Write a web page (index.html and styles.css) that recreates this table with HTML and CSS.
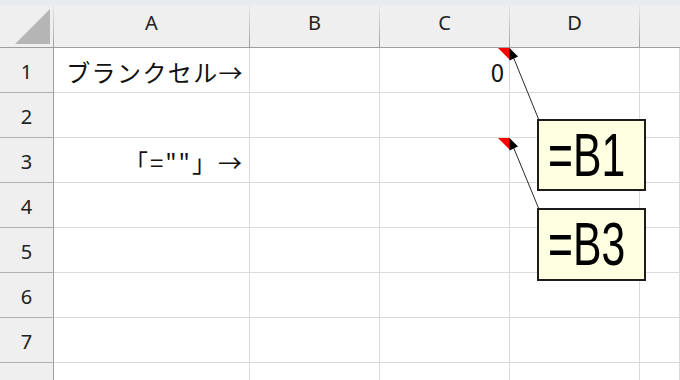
FILE: index.html
```html
<!DOCTYPE html>
<html lang="ja">
<head>
<meta charset="utf-8">
<link rel="stylesheet" href="styles.css">
</head>
<body>
<div class="app">
  <div class="topbar"></div>
  <div class="sheet">
    <div class="grid">
      <div class="corner"><span class="corner-tri"></span></div>
      <div class="colhead">A</div>
      <div class="colhead">B</div>
      <div class="colhead">C</div>
      <div class="colhead">D</div>
      <div class="colhead last"></div>

      <div class="rowhead">1</div>
      <div class="cell jp spaced">ブランクセル→</div>
      <div class="cell"></div>
      <div class="cell jp">0</div>
      <div class="cell"></div>
      <div class="cell"></div>

      <div class="rowhead">2</div>
      <div class="cell"></div>
      <div class="cell"></div>
      <div class="cell"></div>
      <div class="cell"></div>
      <div class="cell"></div>

      <div class="rowhead">3</div>
      <div class="cell jp wide">「=""」→</div>
      <div class="cell"></div>
      <div class="cell"></div>
      <div class="cell"></div>
      <div class="cell"></div>

      <div class="rowhead">4</div>
      <div class="cell"></div>
      <div class="cell"></div>
      <div class="cell"></div>
      <div class="cell"></div>
      <div class="cell"></div>

      <div class="rowhead">5</div>
      <div class="cell"></div>
      <div class="cell"></div>
      <div class="cell"></div>
      <div class="cell"></div>
      <div class="cell"></div>

      <div class="rowhead">6</div>
      <div class="cell"></div>
      <div class="cell"></div>
      <div class="cell"></div>
      <div class="cell"></div>
      <div class="cell"></div>

      <div class="rowhead">7</div>
      <div class="cell"></div>
      <div class="cell"></div>
      <div class="cell"></div>
      <div class="cell"></div>
      <div class="cell"></div>

      <div class="rowhead">8</div>
      <div class="cell"></div>
      <div class="cell"></div>
      <div class="cell"></div>
      <div class="cell"></div>
      <div class="cell"></div>
    </div>

    <svg class="overlay" width="680" height="375" viewBox="0 0 680 375">
      <polygon points="498,43 510,43 510,55" fill="#ff0000"/>
      <polygon points="498,133 510,133 510,145" fill="#ff0000"/>
      <line x1="510" y1="44" x2="538.5" y2="114" stroke="#2a2a2a" stroke-width="1"/>
      <line x1="510" y1="134" x2="538.5" y2="203" stroke="#2a2a2a" stroke-width="1"/>
      <polygon points="509.5,43 518,51.5 509.5,55.5" fill="#000"/>
      <polygon points="509.5,133 518,141.5 509.5,145.5" fill="#000"/>
    </svg>

    <div class="note note1"><span class="note-text">=B1</span></div>
    <div class="note note2"><span class="note-text">=B3</span></div>
  </div>
</div>
</body>
</html>
```
FILE: styles.css
```css
html, body {
  margin: 0;
  padding: 0;
  background: #ffffff;
}

.app {
  width: 680px;
  height: 380px;
  overflow: hidden;
  display: flex;
  flex-direction: column;
}

.topbar {
  height: 5px;
  flex: none;
  background: #e8ecf1;
}

.sheet {
  position: relative;
  flex: 1;
  overflow: hidden;
}

.grid {
  display: grid;
  grid-template-columns: 54px 196px 130px 130px 130px 1fr;
  grid-template-rows: 43px repeat(8, 45px);
}

.corner,
.colhead {
  background: #efefef;
  box-sizing: border-box;
  border-right: 1px solid #a0a0a0;
  border-image: linear-gradient(to bottom, #eaeaea, #9c9c9c) 1;
  box-shadow: inset 0 -1px 0 #9e9e9e;
}

.corner {
  position: relative;
}

.corner-tri {
  position: absolute;
  left: 15px;
  top: 4px;
  width: 35px;
  height: 35px;
  background: #b5b5b5;
  clip-path: polygon(100% 0, 100% 100%, 0 100%);
}

.colhead {
  display: flex;
  align-items: center;
  justify-content: center;
  padding-bottom: 9px;
  font-family: "Noto Sans", "Open Sans", sans-serif;
  font-size: 20px;
  color: #222222;
}

.colhead.last {
  border-right: none;
}

.rowhead {
  background: #efefef;
  box-sizing: border-box;
  border-right: 1px solid #a0a0a0;
  border-bottom: 1px solid #b0b0b0;
  display: flex;
  align-items: center;
  justify-content: center;
  padding-top: 2px;
  font-family: "Noto Sans", "Open Sans", sans-serif;
  font-size: 20px;
  color: #222222;
}

.cell {
  box-sizing: border-box;
  border-right: 1px solid #dadada;
  border-bottom: 1px solid #dadada;
  display: flex;
  align-items: center;
  justify-content: flex-end;
  padding-right: 5px;
  padding-top: 2px;
  white-space: nowrap;
  overflow: visible;
}

.jp {
  font-family: "Noto Sans CJK JP", "Noto Sans", sans-serif;
  font-size: 24px;
  color: #111111;
}

.spaced {
  letter-spacing: 1.4px;
}

.wide {
  letter-spacing: 2px;
}

.overlay {
  position: absolute;
  left: 0;
  top: 0;
  pointer-events: none;
}

.note {
  position: absolute;
  left: 537px;
  width: 109px;
  box-sizing: border-box;
  border: 2px solid #1c1c1c;
  background: #ffffe1;
  display: flex;
  align-items: center;
  padding-left: 9px;
  overflow: hidden;
}

.note1 {
  top: 114px;
  height: 72px;
}

.note2 {
  top: 203px;
  height: 73px;
}

.note-text {
  font-family: "Liberation Sans", Arial, sans-serif;
  font-size: 61px;
  line-height: 1;
  color: #000000;
  transform: scaleX(0.7);
  transform-origin: left center;
  white-space: nowrap;
}
```
